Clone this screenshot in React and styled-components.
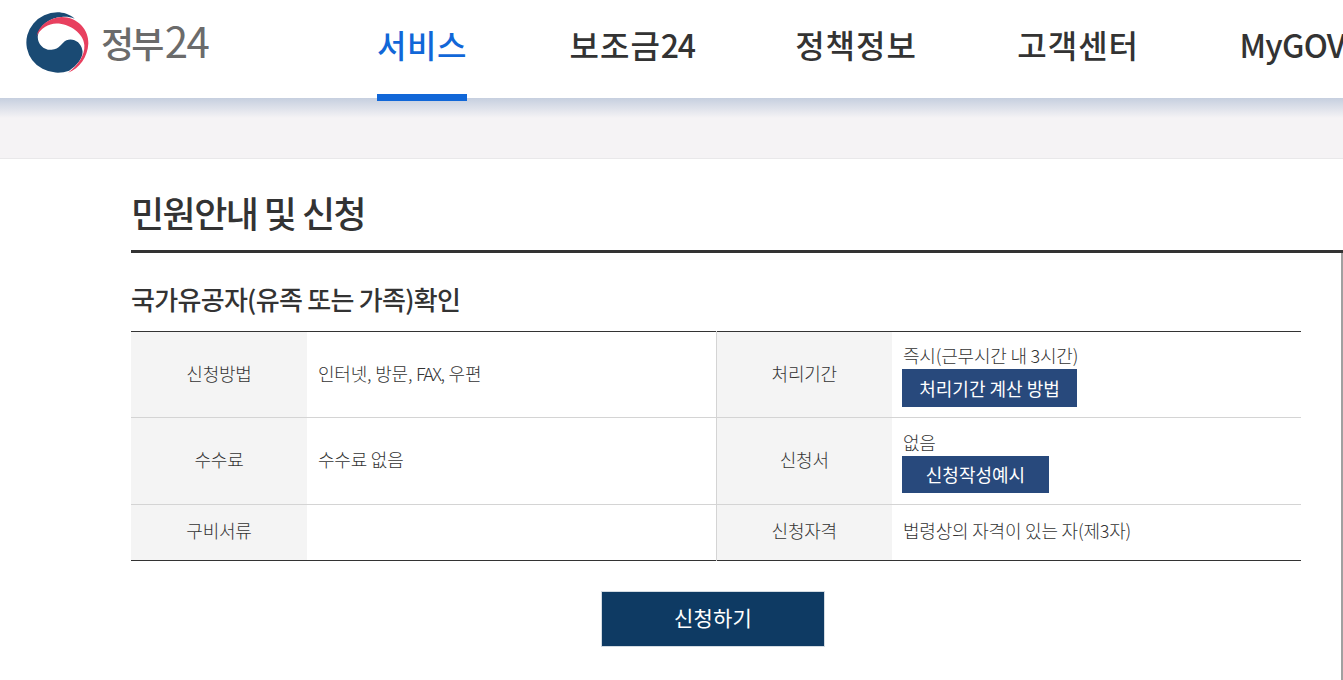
import styled, { createGlobalStyle } from "styled-components";

const GlobalStyle = createGlobalStyle`
  html, body {
    margin: 0;
    padding: 0;
    height: 680px;
    overflow: hidden;
    background: #fff;
  }
  body {
    font-family: "Noto Sans CJK KR", "Noto Sans", sans-serif;
    color: #333;
  }
`;

const Header = styled.header`
  height: 98px;
  display: flex;
  background: #fff;
  position: relative;
  z-index: 2;
`;

const LogoLink = styled.a`
  display: flex;
  align-items: center;
  gap: 12px;
  width: 377px;
  height: 98px;
  padding: 0 0 13px 26px;
  box-sizing: border-box;
  flex: none;
`;

const LogoText = styled.span`
  margin-bottom: 5px;
  font-size: 36px;
  line-height: 1;
  letter-spacing: -2.8px;
  color: #6b6b6b;
  white-space: nowrap;
  font-weight: 500;
`;

const LogoDigits = styled.span`
  margin-left: 3px;
  font-size: 42px;
  font-weight: 400;
  letter-spacing: -1.5px;
`;

const Nav = styled.nav`
  display: flex;
  gap: 100.4px;
  white-space: nowrap;
`;

const NavItem = styled.a`
  display: block;
  height: 101px;
  box-sizing: border-box;
  padding-top: 21px;
  font-size: 32px;
  line-height: 46px;
  font-weight: 500;
  letter-spacing: ${({ $active }) => ($active ? "0.6px" : "1px")};
  margin-right: ${({ $active }) => ($active ? "2px" : "0")};
  color: ${({ $active }) => ($active ? "#1167d8" : "#333")};
  border-bottom: ${({ $active }) => ($active ? "7px solid #1167d8" : "0")};
`;

const NavLatin = styled.span`
  letter-spacing: ${({ $spacing }) => $spacing}px;
`;

const Band = styled.div`
  height: 60px;
  border-bottom: 1px solid #e9e8ea;
  background: linear-gradient(#c6cfdf 0, #f5f3f5 20px, #f5f3f5 100%);
`;

const Content = styled.main`
  position: relative;
  margin-left: 131px;
`;

const PageTitle = styled.h1`
  margin: 0;
  height: 94px;
  box-sizing: border-box;
  padding-top: 26px;
  font-size: 36px;
  line-height: 54px;
  font-weight: 500;
  letter-spacing: -1.55px;
  color: #333;
  border-bottom: 3px solid #333;
`;

const SideRule = styled.div`
  position: absolute;
  top: 94px;
  right: 0;
  width: 2px;
  height: 440px;
  background: #a0a0a0;
`;

const SectionTitle = styled.h2`
  margin: 0;
  height: 78px;
  padding-top: 27px;
  box-sizing: border-box;
  font-size: 26px;
  line-height: 38px;
  font-weight: 500;
  letter-spacing: -0.7px;
  color: #333;
`;

const InfoTable = styled.table`
  width: 1170px;
  border-collapse: collapse;
  table-layout: fixed;
  border-top: 1px solid #333;
  border-bottom: 1px solid #333;
  font-size: 18px;
  font-weight: 300;
  letter-spacing: -0.2px;
  color: #333;
`;

const Row = styled.tr`
  height: ${({ $h }) => $h}px;
  border-bottom: 1px solid #d4d4d4;
  &:last-child {
    border-bottom: 0;
  }
`;

const HeadCell = styled.th`
  padding: 0 0 ${({ $lift }) => $lift || 4}px;
  background: #f4f4f4;
  font-weight: 300;
  text-align: center;
  border-left: ${({ $divided }) => ($divided ? "1px solid #d4d4d4" : "0")};
`;

const BodyCell = styled.td`
  padding: 0 0 ${({ $lift }) => $lift || 4}px 11px;
  line-height: 24px;
  vertical-align: middle;
`;

const StackedCell = styled.td`
  padding: ${({ $top }) => $top}px 0 0 11px;
  vertical-align: top;
`;

const CellLine = styled.div`
  line-height: 24px;
  height: 26px;
`;

const Latin = styled.span`
  letter-spacing: -1.6px;
`;

const MiniButton = styled.a`
  display: block;
  width: ${({ $w }) => $w}px;
  height: ${({ $h }) => $h}px;
  margin-left: -1px;
  background: #28497c;
  color: #fff;
  font-size: 18px;
  font-weight: 400;
  line-height: ${({ $h }) => $h}px;
  text-align: center;
  letter-spacing: 0;
`;

const Actions = styled.div`
  width: 1164px;
  display: flex;
  justify-content: center;
  padding-top: 30px;
`;

const ApplyButton = styled.a`
  display: block;
  width: 224px;
  height: 56px;
  box-sizing: border-box;
  border: 1px solid #d3dbe2;
  background: #0e3a63;
  color: #fff;
  font-size: 21px;
  font-weight: 400;
  line-height: 51px;
  text-align: center;
  letter-spacing: 0.2px;
`;

const Emblem = () => (
  <svg width="63" height="61" viewBox="48 36 190 182" aria-hidden="true">
    <path
      d="M143 36 A95 91 0 1 0 178 212 C205 195 222 170 218 150 C214 125 190 112 170 120 C155 127 150 147 125 149 C100 151 80 128 84 105 C88 75 120 52 155 50 C170 49 182 50 195 55 C180 42 160 36 143 36Z"
      fill="#1a4a73"
    />
    <path
      d="M80 108 C86 75 120 52 155 50 C205 50 238 90 236 130 C234 170 210 205 175 218 C205 195 226 165 224 135 C222 100 180 70 140 70 C115 70 92 85 80 108Z"
      fill="#e8405f"
    />
  </svg>
);

export default function App() {
  return (
    <>
      <GlobalStyle />
      <Header>
        <LogoLink>
          <Emblem />
          <LogoText>
            정부<LogoDigits>24</LogoDigits>
          </LogoText>
        </LogoLink>
        <Nav>
          <NavItem $active>서비스</NavItem>
          <NavItem>
            보조금<NavLatin $spacing={-1.3}>24</NavLatin>
          </NavItem>
          <NavItem>정책정보</NavItem>
          <NavItem>고객센터</NavItem>
          <NavItem>
            <NavLatin $spacing={-0.7}>MyGOV</NavLatin>
          </NavItem>
        </Nav>
      </Header>
      <Band />
      <Content>
        <PageTitle>민원안내 및 신청</PageTitle>
        <SideRule />
        <SectionTitle>국가유공자(유족 또는 가족)확인</SectionTitle>
        <InfoTable>
          <colgroup>
            <col style={{ width: 176 }} />
            <col style={{ width: 409 }} />
            <col style={{ width: 176 }} />
            <col style={{ width: 409 }} />
          </colgroup>
          <tbody>
            <Row $h={86}>
              <HeadCell>신청방법</HeadCell>
              <BodyCell>
                인터넷, 방문, <Latin>FAX</Latin>, 우편
              </BodyCell>
              <HeadCell $divided>처리기간</HeadCell>
              <StackedCell $top={11}>
                <CellLine>즉시(근무시간 내 3시간)</CellLine>
                <MiniButton $w={175} $h={38}>
                  처리기간 계산 방법
                </MiniButton>
              </StackedCell>
            </Row>
            <Row $h={87}>
              <HeadCell>수수료</HeadCell>
              <BodyCell>수수료 없음</BodyCell>
              <HeadCell $divided>신청서</HeadCell>
              <StackedCell $top={12}>
                <CellLine>없음</CellLine>
                <MiniButton $w={147} $h={37}>
                  신청작성예시
                </MiniButton>
              </StackedCell>
            </Row>
            <Row $h={56}>
              <HeadCell $lift={6}>구비서류</HeadCell>
              <BodyCell />
              <HeadCell $divided $lift={6}>
                신청자격
              </HeadCell>
              <BodyCell $lift={6}>법령상의 자격이 있는 자(제3자)</BodyCell>
            </Row>
          </tbody>
        </InfoTable>
        <Actions>
          <ApplyButton>신청하기</ApplyButton>
        </Actions>
      </Content>
    </>
  );
}
